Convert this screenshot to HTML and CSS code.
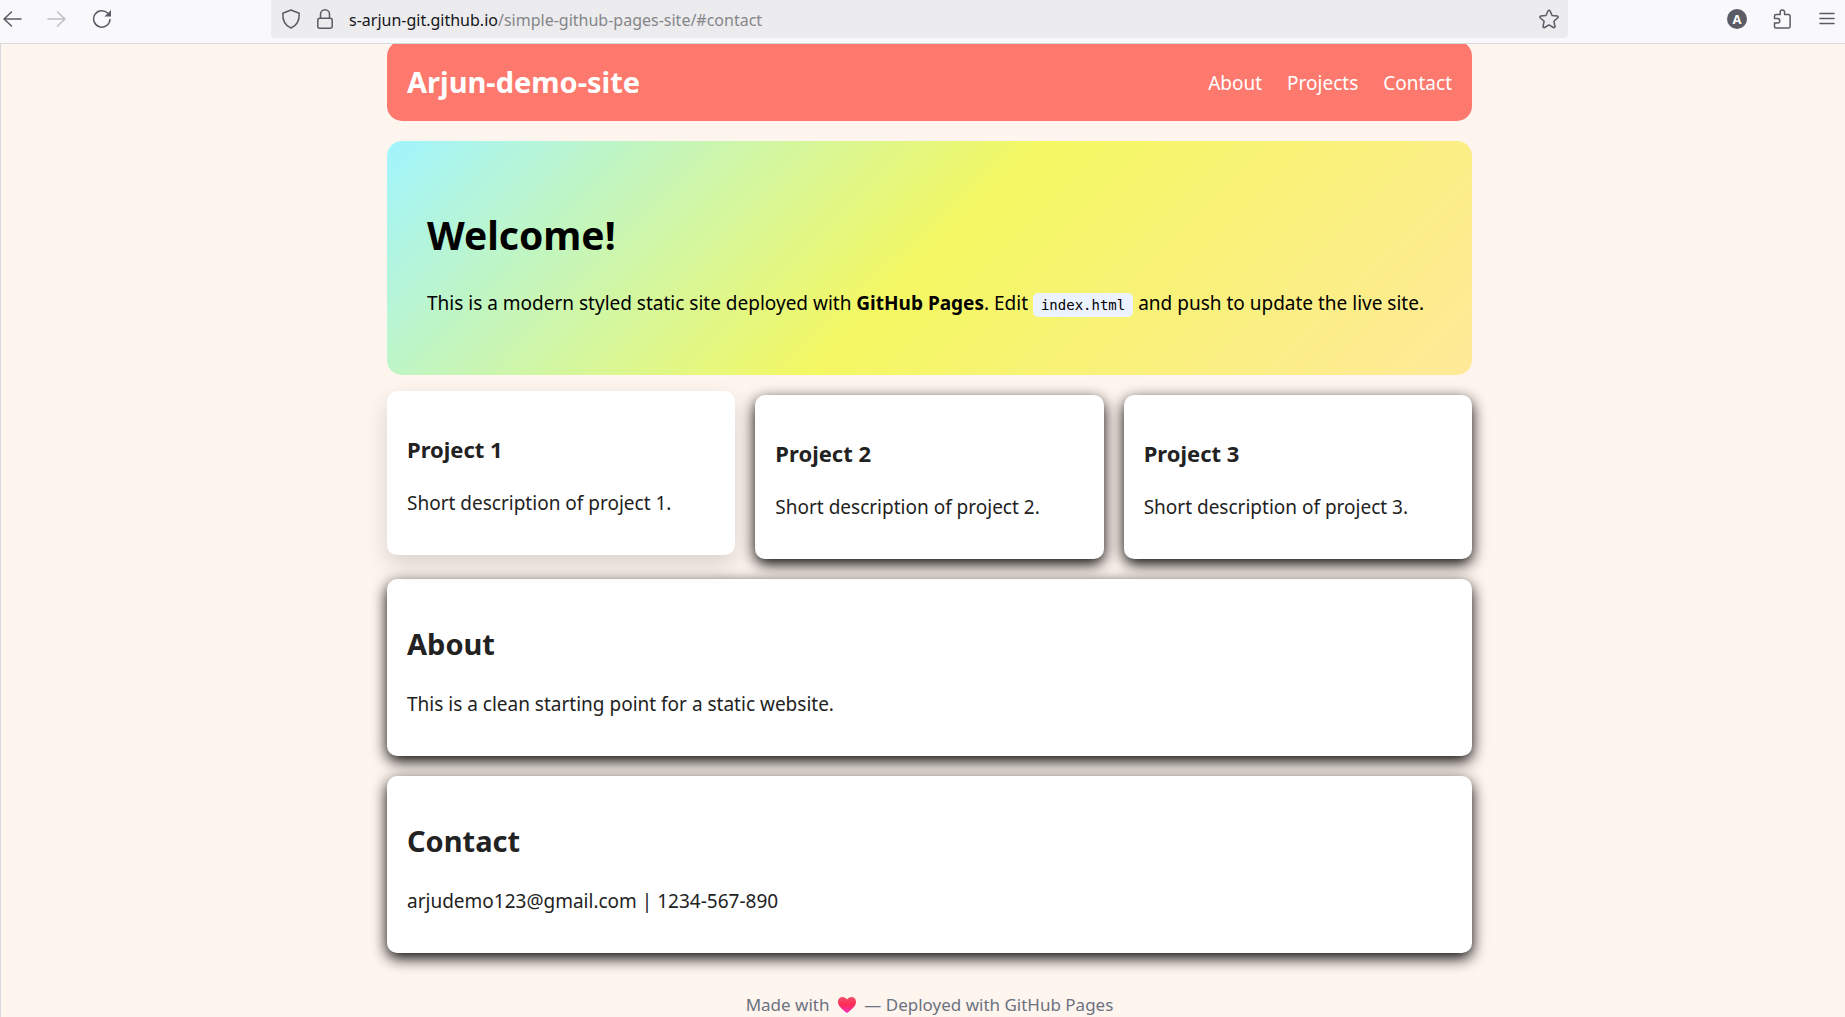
FILE: index.html
```html
<!DOCTYPE html>
<html lang="en">
<head>
<meta charset="utf-8">
<title>Arjun-demo-site</title>
<link rel="stylesheet" href="styles.css">
</head>
<body>
<div class="toolbar">
  <div class="tools">
    <button class="tool" type="button" aria-label="Back"><svg viewBox="0 0 20 20"><path d="M19 10H2M9.500 3 2 10l7.500 7"/></svg></button>
    <button class="tool" type="button" aria-label="Forward" disabled><svg viewBox="0 0 20 20"><path d="M1 10h17M10.500 3 18 10l-7.500 7"/></svg></button>
    <button class="tool" type="button" aria-label="Reload"><svg viewBox="0 0 20 20"><path d="M18 10.500A8.200 8.200 0 1 1 15.500 4"/><path class="solid" d="M19 1v6.500h-6.500z"/></svg></button>
  </div>
  <div class="urlbar">
    <button class="tool" type="button" aria-label="Tracking protection"><svg viewBox="0 0 20 20"><path d="M10 1 1.800 4.200C1.500 11 4 16.500 10 19c6-2.500 8.500-8 8.200-14.800z"/></svg></button>
    <button class="tool" type="button" aria-label="Site information"><svg viewBox="0 0 20 20"><rect x="2.800" y="9.300" width="14.400" height="9.900" rx="2"/><path d="M5.500 9V5.300a4.500 4.500 0 0 1 9 0V9"/></svg></button>
    <div class="address" role="textbox" aria-label="Address" contenteditable="true" spellcheck="false"><span class="host">s-arjun-git.github.io</span>/simple-github-pages-site/#contact</div>
    <button class="tool" type="button" aria-label="Bookmark this page"><svg viewBox="0 0 20 20"><path d="M9.100 1.700a1 1 0 0 1 1.800 0l2.200 4.800 5.200.6a1 1 0 0 1 .5 1.700l-3.900 3.500 1.100 5.200a1 1 0 0 1-1.500 1L10 15.900l-4.500 2.600a1 1 0 0 1-1.500-1l1.100-5.200L1.200 8.800a1 1 0 0 1 .5-1.700l5.200-.6z"/></svg></button>
  </div>
  <div class="tools">
    <button class="tool account" type="button" aria-label="Account">A</button>
    <button class="tool" type="button" aria-label="Extensions"><svg viewBox="0 0 20 20"><path d="M4 5.500h4.200V3.200a2.200 2.200 0 0 1 4.400 0v2.300h4a1.500 1.500 0 0 1 1.500 1.500v10.500a1.500 1.500 0 0 1-1.500 1.500H4a1.500 1.500 0 0 1-1.500-1.500V14h3a2 2 0 0 0 0-4.500h-3V7A1.500 1.500 0 0 1 4 5.500z"/></svg></button>
    <button class="tool" type="button" aria-label="Menu"><svg viewBox="0 0 20 20"><path d="M3 4.500h14M3 9.500h14M3 14.500h14"/></svg></button>
  </div>
</div>
<div class="page">
  <div class="container">
    <header class="site-header">
      <div class="brand">Arjun-demo-site</div>
      <nav class="site-nav">
        <a href="#about">About</a>
        <a href="#projects">Projects</a>
        <a href="#contact">Contact</a>
      </nav>
    </header>
    <main>
      <section class="hero">
        <h1>Welcome!</h1>
        <p>This is a modern styled static site deployed with <strong>GitHub Pages</strong>. Edit <code>index.html</code> and push to update the live site.</p>
      </section>
      <section class="projects" id="projects">
        <article class="card raised">
          <h3>Project 1</h3>
          <p>Short description of project 1.</p>
        </article>
        <article class="card">
          <h3>Project 2</h3>
          <p>Short description of project 2.</p>
        </article>
        <article class="card">
          <h3>Project 3</h3>
          <p>Short description of project 3.</p>
        </article>
      </section>
      <section class="card" id="about">
        <h2>About</h2>
        <p>This is a clean starting point for a static website.</p>
      </section>
      <section class="card" id="contact">
        <h2>Contact</h2>
        <p>arjudemo123@gmail.com | 1234-567-890</p>
      </section>
    </main>
    <footer class="site-footer">Made with
      <svg class="heart" viewBox="0 0 20 18" role="img" aria-label="love"><defs><linearGradient id="heart-fill" x1="0" y1="0" x2="0" y2="1"><stop offset="0" stop-color="#f0506a"/><stop offset=".5" stop-color="#ff2b55"/><stop offset="1" stop-color="#f02fc0"/></linearGradient></defs><path fill="url(#heart-fill)" d="M10 17C5 13.500 1 10 1 5.800 1 3 3 1 5.600 1 7.500 1 9 2 10 3.600 11 2 12.500 1 14.400 1 17 1 19 3 19 5.800c0 4.200-4 7.700-9 11.200z"/></svg>
      — Deployed with GitHub Pages</footer>
  </div>
</div>
</body>
</html>
```
FILE: styles.css
```css
* { box-sizing: border-box; }

body {
  margin: 0;
  height: 100vh;
  display: flex;
  flex-direction: column;
  overflow: hidden;
  font-family: "Noto Sans", "Open Sans", sans-serif;
  font-size: 19px;
  line-height: 27px;
  color: #222;
  background: #fff5ef;
}

/* Browser toolbar */
.toolbar {
  flex: none;
  display: flex;
  gap: 159px;
  height: 44px;
  padding: 0 8px 5px 2px;
  background: #f9f9fb;
  border-bottom: 1px solid #d8d8dd;
}

.tools {
  display: flex;
  align-items: center;
  gap: 25px;
}

.tool {
  flex: none;
  width: 20px;
  height: 20px;
  padding: 0;
  border: 0;
  background: none;
  color: #5b5b66;
}

.tool:disabled { color: #bebec4; }

.tool svg {
  display: block;
  width: 20px;
  height: 20px;
  fill: none;
  stroke: currentColor;
  stroke-width: 1.5;
  stroke-linecap: round;
  stroke-linejoin: round;
}

.tool .solid { fill: currentColor; stroke: none; }

.account {
  border-radius: 50%;
  background: #5b5b66;
  color: #fff;
  font: bold 13px/20px "Open Sans", sans-serif;
}

.urlbar {
  flex: 1;
  min-width: 0;
  display: flex;
  align-items: center;
  gap: 14px;
  padding: 0 9px 0 10px;
  border-radius: 0 0 4px 4px;
  background: #ececee;
}

.address {
  flex: 1;
  min-width: 0;
  overflow: hidden;
  white-space: nowrap;
  font-size: 16px;
  line-height: 24px;
  padding-top: 2px;
  color: #85858a;
  outline: none;
}

.host { color: #15141a; }

.page {
  flex: 1;
  min-height: 0;
  overflow: auto;
  scrollbar-width: none;
  padding-left: 13px;
  border-left: 1px solid #d8d8dd;
}

.container {
  max-width: 1085px;
  margin: -3px auto 0;
}

.site-header {
  display: flex;
  align-items: center;
  justify-content: space-between;
  padding: 21px 20px 19px;
  margin-bottom: 20px;
  border-radius: 15px;
  background: #fd796d;
  color: #fff;
}

.brand {
  font-size: 29px;
  line-height: 40px;
  font-weight: 700;
}

.site-nav { display: flex; gap: 25px; padding-top: 2px; }

.site-nav a { color: #fff; text-decoration: none; }

.hero {
  padding: 40px;
  margin-bottom: 20px;
  border-radius: 15px;
  background: linear-gradient(135deg, #a1f4fe, #f4f862, #ffe999);
  color: #000;
}

h1, h2, h3, p { margin: 0; }

p { padding-top: 2px; margin-bottom: 18px; }

h1 { font-size: 39px; line-height: 53px; margin: 27px 0; }

h2 { font-size: 29px; line-height: 40px; margin: 25px 0; }

h3 { font-size: 22px; line-height: 31px; margin: 23px 0; }

code {
  padding: 4px 8px;
  border-radius: 5px;
  background: #edf2ff;
  font-family: "DejaVu Sans Mono", monospace;
  font-size: 14px;
  line-height: 14px;
}

.projects {
  display: grid;
  grid-template-columns: repeat(3, 1fr);
  gap: 20px;
  margin-bottom: 20px;
}

.card {
  padding: 20px;
  border-radius: 10px;
  background: #fff;
  box-shadow: 0 5px 15px #000;
}

main > .card { margin-bottom: 20px; }

.raised {
  transform: translateY(-4px);
  box-shadow: 0 10px 25px rgba(0, 0, 0, .15);
}

.site-footer {
  padding-top: 21px;
  text-align: center;
  font-size: 17px;
  line-height: 22px;
  color: #6b7280;
}

.heart { width: 20px; height: 18px; margin: 0 3px; vertical-align: -3px; }
```
